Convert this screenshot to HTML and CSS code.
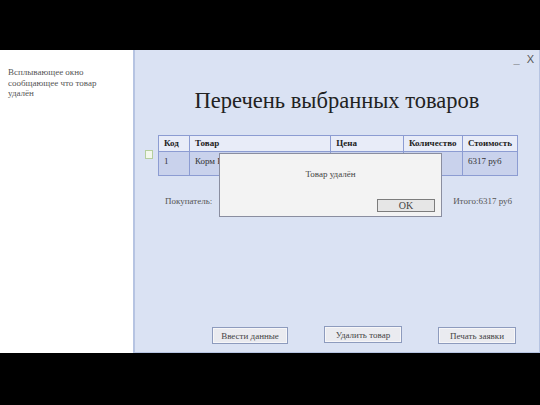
FILE: index.html
```html
<!DOCTYPE html>
<html lang="ru">
<head>
<meta charset="utf-8">
<link rel="stylesheet" href="styles.css">
</head>
<body>
<div class="screen">
  <div class="note">
    <p>Всплывающее окно сообщающее что товар удалён</p>
  </div>
  <div class="panel">
    <div class="winctl"><span class="min">_</span><span class="close">X</span></div>
    <h1 class="title">Перечень выбранных товаров</h1>
    <div class="tablerow">
      <span class="check"></span>
      <table class="goods">
        <thead>
          <tr><th class="c-code">Код</th><th class="c-name">Товар</th><th class="c-price">Цена</th><th class="c-qty">Количество</th><th class="c-sum">Стоимость</th></tr>
        </thead>
        <tbody>
          <tr><td>1</td><td>Корм Royal Canin</td><td>6317 руб</td><td>1</td><td>6317 руб</td></tr>
        </tbody>
      </table>
    </div>
    <div class="summary">
      <span>Покупатель:</span>
      <span>Итого:6317 руб</span>
    </div>
    <div class="actions">
      <button class="btn b1">Ввести данные</button>
      <button class="btn b2">Удалить товар</button>
      <button class="btn b3">Печать заявки</button>
    </div>
    <div class="dialog">
      <p class="msg">Товар удалён</p>
      <button class="ok">OK</button>
    </div>
  </div>
</div>
</body>
</html>
```
FILE: styles.css
```css
html, body { margin: 0; padding: 0; background: #000; }
body { width: 540px; height: 405px; overflow: hidden; font-family: "Liberation Serif", "Times New Roman", serif; }
.screen { display: flex; margin-top: 50px; height: 303px; }
.note { width: 133px; background: #fff; box-sizing: border-box; padding: 17px 0 0 8px; }
.note p { margin: 0; font-size: 9px; line-height: 10.5px; color: #555; width: 100px; }
.panel { flex: 1; position: relative; background: #dae2f3; border-left: 2px solid #b6c4e2; border-right: 1px solid #b6c4e2; border-bottom: 1px solid #b6c4e2; display: flex; flex-direction: column; }
.winctl { height: 20px; display: flex; justify-content: flex-end; align-items: flex-start; gap: 7px; padding: 3px 5px 0 0; box-sizing: border-box; font-family: "Liberation Sans", Arial, sans-serif; font-size: 11px; color: #555; }
.winctl .min { font-weight: bold; line-height: 12px; }
.winctl .close { line-height: 12px; }
.title { margin: 16px 0 0; height: 30px; line-height: 30px; font-size: 22.5px; font-weight: normal; text-align: center; color: #222; }
.tablerow { display: flex; align-items: flex-start; margin-top: 19px; padding-left: 10px; gap: 5px; }
.check { width: 6px; height: 7px; margin-top: 15px; background: #f3f8ec; border: 1px solid #b5cf9e; }
.goods { width: 360px; border-collapse: collapse; font-size: 9px; color: #333; }
.goods th, .goods td { border: 1px solid #8c9cd2; text-align: left; vertical-align: top; padding: 0 5px; }
.goods th { height: 15px; line-height: 15px; background: #e8ecf8; font-weight: bold; color: #222; }
.goods td { height: 24px; padding-top: 4px; box-sizing: border-box; background: #c9d2ec; }
.c-code { width: 20px; }
.c-name { width: 131px; }
.c-price { width: 62px; }
.c-qty { width: 48px; }
.summary { display: flex; justify-content: space-between; margin-top: 18px; padding: 0 27px 0 30px; font-size: 9px; line-height: 14px; color: #555; }
.actions { margin-top: auto; margin-bottom: 8px; display: flex; gap: 36px; padding-left: 77px; }
.btn { height: 17px; padding: 0; font-family: inherit; font-size: 9px; color: #444; background: #eaebf0; border: 1px solid #8d9bbd; box-shadow: inset 0 0 0 1px #f6f6f8; }
.b1 { width: 76px; }
.b2 { width: 78px; margin-top: -1px; }
.b3 { width: 78px; }
.dialog { position: absolute; left: 84px; top: 103px; width: 223px; height: 64px; box-sizing: border-box; background: #f3f3f3; border: 1px solid #8a8ea0; display: flex; flex-direction: column; align-items: center; }
.msg { margin: 14px 0 0; font-size: 9px; line-height: 12px; color: #444; }
.ok { margin: auto 6px 4px auto; width: 58px; height: 13px; padding: 0; font-family: inherit; font-size: 10px; line-height: 11px; color: #444; background: #e6e6e6; border: 1px solid #7c7c7c; }
```
